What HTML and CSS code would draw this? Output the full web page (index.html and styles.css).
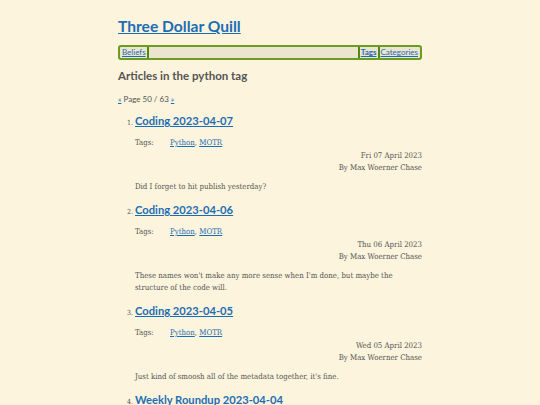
FILE: index.html
```html
<!DOCTYPE html>
<html>
<head>
<meta charset="utf-8">
<link rel="stylesheet" href="styles.css">
</head>
<body>
<div class="page">
  <header>
    <h1 class="site-title"><a href="#">Three Dollar Quill</a></h1>
    <nav class="nav">
      <a class="nav-item sep-right" href="#">Beliefs</a>
      <span class="nav-fill"></span>
      <a class="nav-item sep-left sep-right active" href="#">Tags</a>
      <a class="nav-item" href="#">Categories</a>
    </nav>
  </header>
  <main>
    <h2 class="tag-heading">Articles in the python tag</h2>
    <p class="pager"><a href="#">«</a> Page 50 / 63 <a href="#">»</a></p>
    <ol class="articles" start="1">
      <li class="article">
        <h3 class="article-title"><a href="#">Coding 2023-04-07</a></h3>
        <div class="tags"><span class="tags-label">Tags:</span><span><a href="#">Python</a>, <a href="#">MOTR</a></span></div>
        <div class="meta"><div>Fri 07 April 2023</div><div>By Max Woerner Chase</div></div>
        <p class="summary">Did I forget to hit publish yesterday?</p>
      </li>
      <li class="article">
        <h3 class="article-title"><a href="#">Coding 2023-04-06</a></h3>
        <div class="tags"><span class="tags-label">Tags:</span><span><a href="#">Python</a>, <a href="#">MOTR</a></span></div>
        <div class="meta"><div>Thu 06 April 2023</div><div>By Max Woerner Chase</div></div>
        <p class="summary">These names won't make any more sense when I'm done, but maybe the structure of the code will.</p>
      </li>
      <li class="article">
        <h3 class="article-title"><a href="#">Coding 2023-04-05</a></h3>
        <div class="tags"><span class="tags-label">Tags:</span><span><a href="#">Python</a>, <a href="#">MOTR</a></span></div>
        <div class="meta"><div>Wed 05 April 2023</div><div>By Max Woerner Chase</div></div>
        <p class="summary">Just kind of smoosh all of the metadata together, it's fine.</p>
      </li>
      <li class="article">
        <h3 class="article-title"><a href="#">Weekly Roundup 2023-04-04</a></h3>
        <div class="tags"><span class="tags-label">Tags:</span><span><a href="#">Python</a>, <a href="#">MOTR</a></span></div>
        <div class="meta"><div>Tue 04 April 2023</div><div>By Max Woerner Chase</div></div>
        <p class="summary">Weekly roundup.</p>
      </li>
    </ol>
  </main>
</div>
</body>
</html>
```
FILE: styles.css
```css
html, body {
  margin: 0;
  padding: 0;
  background: #fcf4dc;
}
body {
  font-family: "DejaVu Serif", serif;
  font-stretch: condensed;
  color: #555;
  font-size: 7.8px;
}
.page {
  width: 304px;
  margin: 0 auto;
  padding-top: 15px;
}
a {
  color: #1d6db5;
}
.site-title {
  margin: 0;
  font-family: "Lato", sans-serif;
  font-stretch: normal;
  font-size: 15.6px;
  line-height: 22px;
  font-weight: 700;
}
.nav {
  margin-top: 8px;
  display: flex;
  align-items: stretch;
  height: 11px;
  border: 2px solid #6b9c20;
  border-radius: 3px;
  background: #ebe4cf;
  font-family: "Lato", sans-serif;
  font-stretch: normal;
  font-size: 8px;
  line-height: 11px;
  padding: 0 1px;
}
.nav-item {
  padding: 0 1px;
}
.nav-item.active {
  font-weight: 700;
}
.sep-right { border-right: 2px solid #4f8a10; }
.sep-left { border-left: 2px solid #4f8a10; }
.nav-fill { flex: 1; }
.tag-heading {
  margin: 7px 0 0;
  font-family: "Lato", sans-serif;
  font-stretch: normal;
  font-size: 11.5px;
  line-height: 18px;
  font-weight: 700;
  color: #555;
}
.pager {
  margin: 8px 0 0;
  font-family: "Lato", sans-serif;
  font-stretch: normal;
  font-size: 8px;
  line-height: 12px;
}
.articles {
  margin: 8px 0 0;
  padding-left: 17px;
}
.article::marker {
  font-size: 7px;
  color: #555;
}
.article-title {
  margin: 0;
  font-family: "Lato", sans-serif;
  font-stretch: normal;
  font-size: 11.2px;
  line-height: 16px;
  font-weight: 700;
}
.tags {
  display: flex;
  margin-top: 8px;
  line-height: 12px;
}
.tags-label {
  width: 35px;
}
.meta {
  margin-top: 1px;
  text-align: right;
  line-height: 12px;
}
.summary {
  margin: 7px 0 9px;
  line-height: 12px;
}
```
